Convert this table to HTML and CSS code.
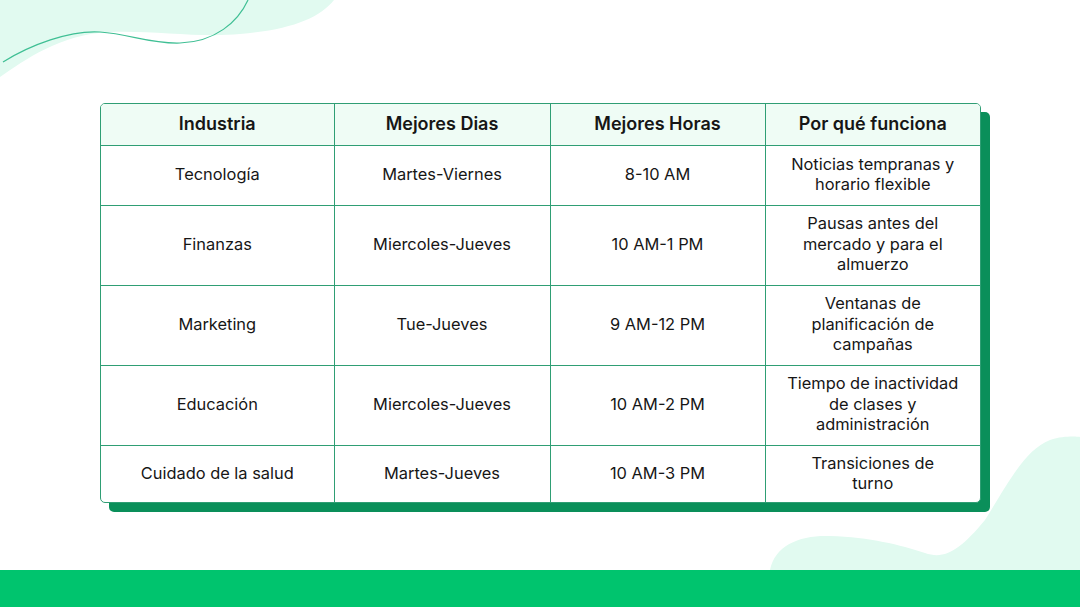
FILE: index.html
```html
<!DOCTYPE html>
<html lang="es">
<head>
<meta charset="utf-8">
<title>Mejores horarios por industria</title>
<link rel="stylesheet" href="styles.css">
</head>
<body>
<div class="page">
  <svg class="deco deco-top" width="340" height="80" viewBox="0 0 340 80">
    <path d="M0 0 H334 C320 18 290 30 240 34 C200 38 150 30 110 32 C60 34 25 60 0 77 Z" fill="#e1faf0"/>
    <path d="M3 62 C30 45 70 30 100 32 C130 34 150 44 180 43 C215 42 238 22 248 0" fill="none" stroke="#3fbf94" stroke-width="1.2"/>
  </svg>
  <svg class="deco deco-bottom" width="320" height="140" viewBox="0 0 320 140">
    <path d="M10 140 C15 115 40 105 70 106 C110 107 140 115 165 123 C185 130 200 120 225 90 C250 50 265 20 290 10 C305 5 320 7 320 7 V140 Z" fill="#e1faf0"/>
  </svg>
  <main class="content">
    <div class="table-wrap">
      <table class="grid">
        <thead>
          <tr>
            <th class="c1">Industria</th>
            <th class="c2">Mejores Dias</th>
            <th class="c3">Mejores Horas</th>
            <th class="c4">Por qué funciona</th>
          </tr>
        </thead>
        <tbody>
          <tr class="r-short">
            <td>Tecnología</td>
            <td>Martes-Viernes</td>
            <td>8-10 AM</td>
            <td>Noticias tempranas y<br>horario flexible</td>
          </tr>
          <tr class="r-tall">
            <td>Finanzas</td>
            <td>Miercoles-Jueves</td>
            <td>10 AM-1 PM</td>
            <td>Pausas antes del<br>mercado y para el<br>almuerzo</td>
          </tr>
          <tr class="r-tall">
            <td>Marketing</td>
            <td>Tue-Jueves</td>
            <td>9 AM-12 PM</td>
            <td>Ventanas de<br>planificación de<br>campañas</td>
          </tr>
          <tr class="r-tall">
            <td>Educación</td>
            <td>Miercoles-Jueves</td>
            <td>10 AM-2 PM</td>
            <td>Tiempo de inactividad<br>de clases y<br>administración</td>
          </tr>
          <tr class="r-last">
            <td>Cuidado de la salud</td>
            <td>Martes-Jueves</td>
            <td>10 AM-3 PM</td>
            <td>Transiciones de<br>turno</td>
          </tr>
        </tbody>
      </table>
    </div>
  </main>
  <footer class="band"></footer>
</div>
</body>
</html>
```
FILE: styles.css
```css
* { box-sizing: border-box; }
html, body { margin: 0; padding: 0; }
body {
  width: 1080px;
  height: 607px;
  overflow: hidden;
  background: #ffffff;
  font-family: Inter, "Liberation Sans", sans-serif;
  color: #161616;
}
.page {
  position: relative;
  width: 1080px;
  height: 607px;
  display: flex;
  flex-direction: column;
}
.deco { position: absolute; z-index: 0; }
.deco-top { left: 0; top: 0; }
.deco-bottom { left: 760px; top: 430px; }
.content {
  position: relative;
  z-index: 1;
  flex: 1;
  display: flex;
  justify-content: center;
  padding-top: 103px;
}
.table-wrap {
  width: 881px;
  height: 400px;
  margin-left: 1px;
  border: 1px solid #2f9e74;
  border-radius: 5px;
  background: #ffffff;
  box-shadow: 9px 9px 0 0 #0a8f5a;
  overflow: hidden;
}
.grid {
  width: 100%;
  border-collapse: collapse;
  table-layout: fixed;
}
.grid th, .grid td {
  border: 1px solid #2f9e74;
  text-align: center;
  vertical-align: middle;
  padding: 0 4px;
  font-size: 16.4px;
  line-height: 20.5px;
}
.grid tr > :first-child { border-left: none; }
.grid tr > :last-child { border-right: none; }
.grid thead th { border-top: none; }
.grid tbody tr:last-child td { border-bottom: none; }
.grid th {
  height: 41px;
  background: #effcf5;
  font-size: 18px;
  font-weight: 600;
  padding-bottom: 1px;
}
.c1 { width: 233px; }
.c2 { width: 216px; }
.c3 { width: 215px; }
.c4 { width: auto; }
.r-short td { height: 60px; padding-bottom: 2px; }
.r-tall td { height: 80px; padding-bottom: 2px; }
.r-last td { height: 58px; padding-bottom: 2px; }
.band {
  position: relative;
  z-index: 1;
  height: 37px;
  background: #00c46e;
}
```
